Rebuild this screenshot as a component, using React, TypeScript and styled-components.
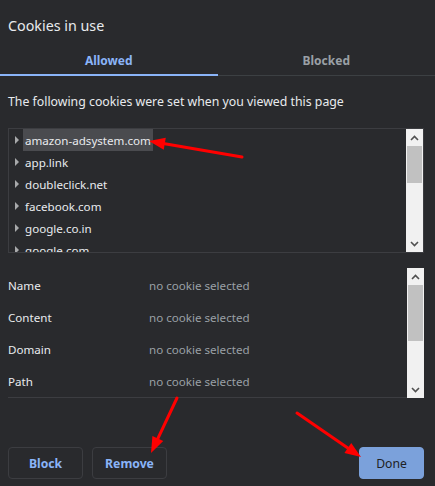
import styled, { createGlobalStyle } from "styled-components";

const GlobalStyle = createGlobalStyle`
  html, body {
    margin: 0;
    padding: 0;
    background: #292a2d;
  }
  body {
    font-family: "Noto Sans", "Open Sans", Arial, sans-serif;
    color: #e8eaed;
  }
`;

const Page = styled.div`
  position: relative;
  width: 435px;
  height: 486px;
  overflow: hidden;
  background: #292a2d;
`;

const Title = styled.h2`
  margin: 0;
  padding: 15px 8px 0;
  font-size: 14.3px;
  font-weight: 400;
  line-height: 22px;
`;

const Tabs = styled.div`
  display: flex;
  margin-top: 8px;
  border-bottom: 1px solid #3c4043;
`;

const Tab = styled.div<{ active?: boolean }>`
  flex: 1;
  height: 31px;
  box-sizing: border-box;
  margin-bottom: -1px;
  display: flex;
  align-items: center;
  justify-content: center;
  font-size: 12px;
  font-weight: 700;
  color: ${({ active }) => (active ? "#8ab4f8" : "#9aa0a6")};
  box-shadow: ${({ active }) => (active ? "inset 0 -2px 0 #8ab4f8" : "none")};
`;

const Description = styled.p`
  margin: 0;
  padding: 16px 8px 0;
  font-size: 12.3px;
  line-height: 20px;
`;

const ListBox = styled.div`
  display: flex;
  margin: 16px 11px 0 8px;
  height: 125px;
  border: 1px solid #3c3d41;
  box-sizing: border-box;
`;

const ListItems = styled.div`
  flex: 1;
  overflow: hidden;
`;

const ListRow = styled.div`
  display: flex;
  align-items: center;
  height: 22px;
  padding-left: 6px;
  font-size: 11.6px;
`;

const Expander = styled.span`
  width: 0;
  height: 0;
  border-top: 4px solid transparent;
  border-bottom: 4px solid transparent;
  border-left: 4px solid #a8a9ab;
  margin-right: 4px;
`;

const SiteName = styled.span<{ selected?: boolean }>`
  height: 22px;
  line-height: 24px;
  padding: 0 2px;
  background: ${({ selected }) => (selected ? "#4a4b4f" : "transparent")};
`;

const Scrollbar = styled.div`
  width: 17px;
  display: flex;
  flex-direction: column;
  background: #f1f1f1;
`;

const ScrollArrow = styled.div`
  height: 17px;
  display: flex;
  align-items: center;
  justify-content: center;
`;

const Track = styled.div`
  flex: 1;
  display: flex;
  flex-direction: column;
  padding: 0 1px;
`;

const Thumb = styled.div<{ size: number }>`
  height: ${({ size }) => size}px;
  background: #c1c1c1;
`;

const DetailsBox = styled.div`
  display: flex;
  margin: 15px 11px 0 8px;
  height: 130px;
`;

const DetailRows = styled.div`
  flex: 1;
  padding-top: 1px;
  border-bottom: 1px solid #3c3d41;
`;

const DetailRow = styled.div`
  display: flex;
  align-items: center;
  height: 32px;
  font-size: 11.6px;
`;

const DetailLabel = styled.span`
  width: 141px;
`;

const DetailValue = styled.span`
  color: #9aa0a6;
`;

const Footer = styled.div`
  display: flex;
  gap: 9px;
  margin: 49px 11px 0 8px;
`;

const Button = styled.button<{ primary?: boolean; width: number }>`
  height: 32px;
  width: ${({ width }) => width}px;
  padding: 0;
  border-radius: 4px;
  font-family: inherit;
  font-size: 12.2px;
  font-weight: ${({ primary }) => (primary ? 400 : 700)};
  color: ${({ primary }) => (primary ? "#202124" : "#8ab4f8")};
  background: ${({ primary }) => (primary ? "#7ba1db" : "transparent")};
  border: 1px solid ${({ primary }) => (primary ? "#7ba1db" : "#3c3d41")};
  &:last-child {
    margin-left: auto;
  }
`;

const Annotations = styled.svg`
  position: absolute;
  left: 0;
  top: 0;
  pointer-events: none;
`;

const Chevron = ({ up }: { up?: boolean }) => (
  <svg width="9" height="6" viewBox="0 0 9 6">
    <path
      d={up ? "M1 5 L4.5 1.5 L8 5" : "M1 1 L4.5 4.5 L8 1"}
      fill="none"
      stroke="#505050"
      strokeWidth="1.6"
    />
  </svg>
);

const FakeScrollbar = ({ offset, size }: { offset: number; size: number }) => (
  <Scrollbar>
    <ScrollArrow>
      <Chevron up />
    </ScrollArrow>
    <Track>
      <div style={{ height: offset }} />
      <Thumb size={size} />
    </Track>
    <ScrollArrow>
      <Chevron />
    </ScrollArrow>
  </Scrollbar>
);

const Arrow = ({ x1, y1, x2, y2 }: { x1: number; y1: number; x2: number; y2: number }) => {
  const dx = x2 - x1;
  const dy = y2 - y1;
  const len = Math.hypot(dx, dy);
  const ux = dx / len;
  const uy = dy / len;
  const head = 16;
  const half = 6;
  const bx = x2 - ux * head;
  const by = y2 - uy * head;
  const pts = [
    `${x2},${y2}`,
    `${bx - uy * half},${by + ux * half}`,
    `${bx + uy * half},${by - ux * half}`,
  ].join(" ");
  return (
    <g>
      <line x1={x1} y1={y1} x2={bx} y2={by} stroke="#ff0000" strokeWidth="3" strokeLinecap="round" />
      <polygon points={pts} fill="#ff0000" />
    </g>
  );
};

const sites = [
  "amazon-adsystem.com",
  "app.link",
  "doubleclick.net",
  "facebook.com",
  "google.co.in",
  "google.com",
];

const details = ["Name", "Content", "Domain", "Path"];

const App = () => {
  return (
    <Page>
      <GlobalStyle />
      <Title>Cookies in use</Title>
      <Tabs>
        <Tab active>Allowed</Tab>
        <Tab>Blocked</Tab>
      </Tabs>
      <Description>The following cookies were set when you viewed this page</Description>
      <ListBox>
        <ListItems>
          {sites.map((site, i) => (
            <ListRow key={site}>
              <Expander />
              <SiteName selected={i === 0}>{site}</SiteName>
            </ListRow>
          ))}
        </ListItems>
        <FakeScrollbar offset={0} size={37} />
      </ListBox>
      <DetailsBox>
        <DetailRows>
          {details.map((label) => (
            <DetailRow key={label}>
              <DetailLabel>{label}</DetailLabel>
              <DetailValue>no cookie selected</DetailValue>
            </DetailRow>
          ))}
        </DetailRows>
        <FakeScrollbar offset={0} size={56} />
      </DetailsBox>
      <Footer>
        <Button width={75}>Block</Button>
        <Button width={75}>Remove</Button>
        <Button width={65} primary>Done</Button>
      </Footer>
      <Annotations width="435" height="486">
        <Arrow x1={242} y1={157} x2={149} y2={141} />
        <Arrow x1={177} y1={398} x2={151} y2={453} />
        <Arrow x1={297} y1={413} x2={361} y2={457} />
      </Annotations>
    </Page>
  );
};

export default App;
